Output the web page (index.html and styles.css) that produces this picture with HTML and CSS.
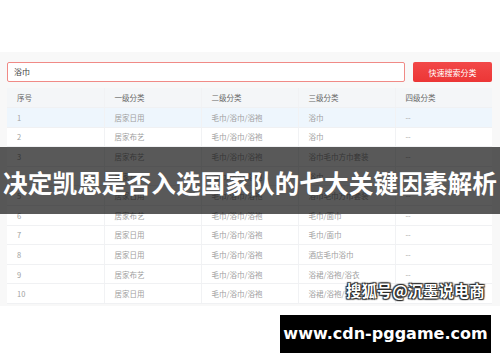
FILE: index.html
```html
<!DOCTYPE html>
<html lang="zh-CN">
<head>
  <meta charset="UTF-8" />
  <meta name="viewport" content="width=device-width, initial-scale=1" />
  <title>分类搜索</title>
  <link rel="stylesheet" href="styles.css">
</head>
<body>

  <div class="page">
    <!-- Search panel -->
    <section class="panel">
      <div class="search-bar">
        <div class="search-input">浴巾</div>
        <button class="search-btn">快速搜索分类</button>
      </div>

      <table class="cat-table">
        <thead>
          <tr><th>序号</th><th>一级分类</th><th>二级分类</th><th>三级分类</th><th>四级分类</th></tr>
        </thead>
        <tbody>
          <tr class="hover"><td>1</td><td>居家日用</td><td>毛巾/浴巾/浴袍</td><td>浴巾</td><td>--</td></tr>
          <tr><td>2</td><td>居家布艺</td><td>毛巾/浴巾/浴袍</td><td>浴巾</td><td>--</td></tr>
          <tr><td>3</td><td>居家布艺</td><td>毛巾/浴巾/浴袍</td><td>浴巾毛巾方巾套装</td><td>--</td></tr>
          <tr><td>4</td><td>居家日用</td><td>毛巾/浴巾/浴袍</td><td>浴巾</td><td>--</td></tr>
          <tr><td>5</td><td>居家日用</td><td>毛巾/浴巾/浴袍</td><td>浴巾毛巾方巾套装</td><td>--</td></tr>
          <tr><td>6</td><td>居家布艺</td><td>毛巾/浴巾/浴袍</td><td>毛巾/面巾</td><td>--</td></tr>
          <tr><td>7</td><td>居家日用</td><td>毛巾/浴巾/浴袍</td><td>毛巾/面巾</td><td>--</td></tr>
          <tr><td>8</td><td>居家日用</td><td>毛巾/浴巾/浴袍</td><td>酒店毛巾浴巾</td><td>--</td></tr>
          <tr><td>9</td><td>居家布艺</td><td>毛巾/浴巾/浴袍</td><td>浴裙/浴袍/浴衣</td><td>--</td></tr>
          <tr><td>10</td><td>居家日用</td><td>毛巾/浴巾/浴袍</td><td>浴裙/浴袍/浴衣</td><td>--</td></tr>
        </tbody>
      </table>
    </section>

    <!-- Title band over the table -->
    <div class="title-band">决定凯恩是否入选国家队的七大关键因素解析</div>

    <!-- Watermark -->
    <div class="watermark">搜狐号@沉墨说电商</div>

    <!-- Site label -->
    <div class="site-label">www.cdn-pggame.com</div>
  </div>

</body>
</html>
```

FILE: styles.css
```css
/* Reset */
body {
  margin: 0;
  padding: 0;
  background: #fff;
  font-family: "Noto Sans CJK SC", "Noto Sans", sans-serif;
}
.page {
  position: relative;
  width: 500px;
  height: 362px;
  overflow: hidden;
  padding-top: 52px;
  box-sizing: border-box;
}
/* Panel */
.panel {
  background: #f8f8f8;
  padding: 10px 8px 2px 7px;
}
.search-bar {
  display: flex;
  gap: 8px;
  margin-bottom: 6px;
}
.search-input {
  flex: 1;
  height: 20px;
  box-sizing: border-box;
  border: 1px solid #f08a86;
  border-radius: 2px;
  background: #fff;
  padding-left: 6px;
  font-size: 8px;
  line-height: 18px;
  color: #444;
}
.search-btn {
  width: 79px;
  height: 20px;
  border: none;
  border-radius: 2px;
  background: linear-gradient(#f24848, #ec3636);
  color: #fff;
  font-family: inherit;
  font-size: 8px;
  padding: 0;
}
/* Table */
.cat-table {
  width: 100%;
  border-collapse: collapse;
  table-layout: fixed;
  background: #fff;
  font-size: 7.5px;
}
.cat-table th,
.cat-table td {
  height: 19.6px;
  padding: 0 0 0 10px;
  text-align: left;
  border-right: 1px solid #f1f2f4;
  border-bottom: 1px solid #f0f1f3;
  box-sizing: border-box;
  white-space: nowrap;
  overflow: hidden;
}
.cat-table th:last-child,
.cat-table td:last-child {
  border-right: none;
}
.cat-table th {
  background: #f4f6f8;
  color: #666;
  font-weight: normal;
}
.cat-table td {
  color: #a0a0a0;
}
.cat-table tr.hover td {
  background: #eef6fd;
}
/* Overlay band */
.title-band {
  position: absolute;
  left: 0;
  top: 147px;
  width: 100%;
  height: 67px;
  background: rgba(0, 0, 0, 0.65);
  color: #fff;
  font-size: 24.6px;
  font-weight: bold;
  line-height: 70px;
  text-align: center;
  white-space: nowrap;
  letter-spacing: 0.1px;
}
.watermark {
  position: absolute;
  left: 346px;
  top: 280px;
  color: #fff;
  font-size: 15.4px;
  font-weight: bold;
  line-height: 20px;
  white-space: nowrap;
  text-shadow: 0 0 1px #000, 1px 1px 1px #333, -1px -1px 1px #333, 1px -1px 1px #333, -1px 1px 1px #333;
}
.site-label {
  position: absolute;
  left: 280px;
  top: 315px;
  width: 211px;
  height: 38px;
  background: #000;
  color: #fff;
  font-family: "DejaVu Sans", sans-serif;
  font-weight: bold;
  font-size: 16px;
  line-height: 38px;
  text-align: center;
  white-space: nowrap;
}
```
